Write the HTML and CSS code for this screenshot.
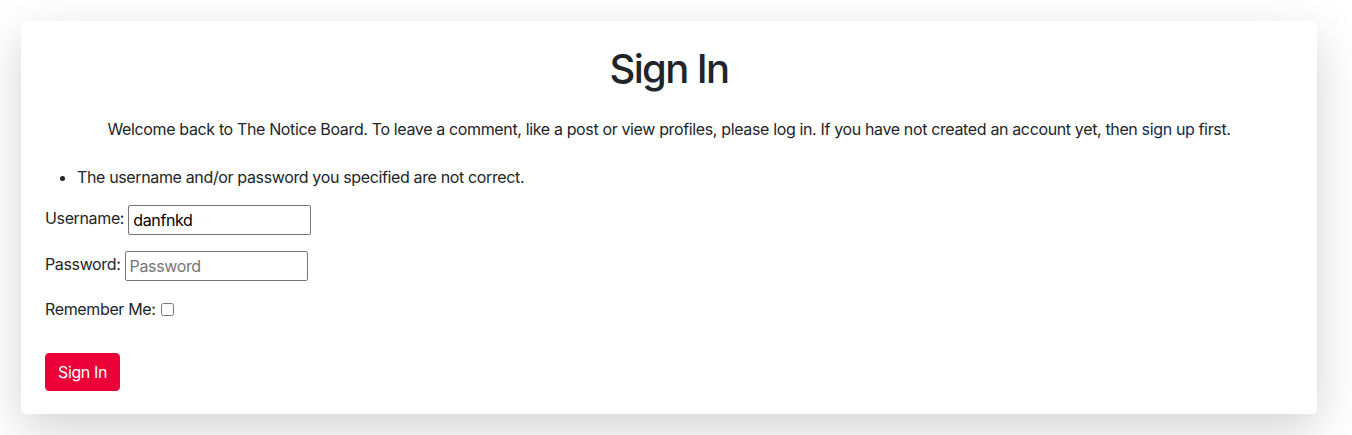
FILE: index.html
```html
<!DOCTYPE html>
<html lang="en">
<head>
<meta charset="utf-8">
<title>Sign In</title>
<link rel="stylesheet" href="styles.css">
</head>
<body>
<main class="page">
  <section class="card">
    <h1 class="title">Sign In</h1>
    <p class="intro">Welcome back to The Notice Board. To leave a comment, like a post or view profiles, please log in. If you have not created an account yet, then <a class="link" href="#">sign up</a> first.</p>
    <form class="login">
      <ul class="errors">
        <li>The username and/or password you specified are not correct.</li>
      </ul>
      <p class="field"><label for="id_login">Username:</label> <input class="text-input" id="id_login" type="text" value="danfnkd"></p>
      <p class="field"><label for="id_password">Password:</label> <input class="text-input" id="id_password" type="password" placeholder="Password"></p>
      <p class="field"><label for="id_remember">Remember Me:</label> <input class="check" id="id_remember" type="checkbox"></p>
      <button class="btn" type="submit">Sign In</button>
    </form>
  </section>
</main>
</body>
</html>
```
FILE: styles.css
```css
* { box-sizing: border-box; }
html, body {
  margin: 0;
  padding: 0;
  background: #fff;
}
body {
  font-family: Inter, "Noto Sans", "Liberation Sans", sans-serif;
  font-size: 16px;
  line-height: 1.5;
  letter-spacing: -0.36px;
  color: #212529;
}
.page {
  padding: 21px 0 21px 21px;
}
.card {
  width: 1296px;
  background: #fff;
  border-radius: 5px;
  box-shadow: 0 1rem 3rem rgba(0, 0, 0, 0.175);
  padding: 24px 24px 23px;
}
.title {
  margin: 0 0 24px;
  font-size: 40px;
  font-weight: 500;
  line-height: 1.2;
  letter-spacing: -1.6px;
  text-align: center;
}
.intro {
  margin: 0 0 24px;
  text-align: center;
}
.link {
  color: #0b2a5c;
  text-decoration: none;
}
.login { margin: 0; }
.errors {
  margin: 0 0 16px;
  padding-left: 32px;
}
.field {
  margin: 0 0 16px;
}
.text-input {
  font: inherit;
  letter-spacing: inherit;
  color: #000;
  width: 183px;
  height: 30px;
  padding: 1px 4px;
  border: 1px solid #767676;
  border-radius: 2px;
  vertical-align: middle;
  background: #fff;
}
.text-input::placeholder { color: #757575; }
.check {
  width: 13px;
  height: 13px;
  margin: 0 0 0 1px;
  vertical-align: -1px;
}
.btn {
  display: inline-block;
  margin-top: 16px;
  font: inherit;
  letter-spacing: inherit;
  line-height: 24px;
  color: #fff;
  background: #ec0038;
  border: 1px solid #ec0038;
  border-radius: 4px;
  padding: 6px 12px;
}
```
